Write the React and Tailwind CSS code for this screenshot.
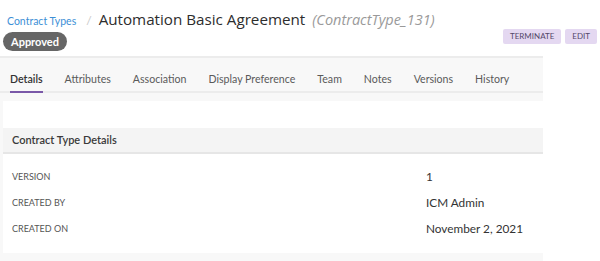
import React from 'react'

const tabs = ['Details', 'Attributes', 'Association', 'Display Preference', 'Team', 'Notes', 'Versions', 'History']

const rows = [
  { label: 'VERSION', value: '1' },
  { label: 'CREATED BY', value: 'ICM Admin' },
  { label: 'CREATED ON', value: 'November 2, 2021' },
]

export default function App() {
  return (
    <div className="w-[600px] h-[261px] bg-white overflow-hidden font-['Lato',sans-serif]">
      {/* Header */}
      <div className="flex items-baseline pl-[7px] pt-[8px] h-[29px]">
        <span className="text-[10.5px] text-[#3d8fd6]">Contract Types</span>
        <span className="text-[12px] text-[#c8c8c8] ml-[10px]">/</span>
        <span className="text-[15.2px] text-[#2d2d2d] ml-[7px] font-['Open_Sans',sans-serif]">Automation Basic Agreement</span>
        <span className="text-[14.5px] text-[#9a9a9a] italic ml-[7px] font-['Open_Sans',sans-serif]">(ContractType_131)</span>
      </div>
      <div className="flex items-start justify-between pl-[3px] pr-[3px] h-[27px]">
        <span className="mt-[3px] h-[19px] px-[8px] rounded-full bg-[#666666] text-white text-[11px] font-bold leading-[19px]">Approved</span>
        <div className="flex gap-[4px]">
          <button className="h-[15px] px-[7px] bg-[#e4d8f1] text-[#54486a] text-[8px] leading-[15px] rounded-[2px]">TERMINATE</button>
          <button className="h-[15px] px-[7px] bg-[#e4d8f1] text-[#54486a] text-[8px] leading-[15px] rounded-[2px]">EDIT</button>
        </div>
      </div>

      {/* Content */}
      <div className="w-[543px] bg-[#f8f8f8]">
        <div className="border-t-[2px] border-[#ececec] border-b-[2px] h-[37px] flex items-end pl-[10px] gap-[22px]">
          {tabs.map((t, i) => (
            <div
              key={t}
              className={`text-[10.6px] pb-[3px] border-b-[2px] -mb-[2px] ${i === 0 ? 'border-[#7a58a8] text-[#333] font-semibold' : 'border-transparent text-[#5a5a5a]'}`}
            >
              {t}
            </div>
          ))}
        </div>
        <div className="h-[8px]" />
        <div className="ml-[3px] bg-white">
          <div className="h-[27px]" />
          <div className="h-[26px] bg-[#f4f4f4] border-b-[2px] border-[#e6e6e6] flex items-center pl-[9px] text-[11px] font-semibold text-[#3a3a3a]">
            Contract Type Details
          </div>
          <div className="pt-[10px] pb-[11px]">
            {rows.map(r => (
              <div key={r.label} className="flex items-center h-[26px] pl-[9px]">
                <span className="w-[414px] text-[9px] text-[#555]">{r.label}</span>
                <span className="text-[11.8px] text-[#333]">{r.value}</span>
              </div>
            ))}
          </div>
        </div>
        <div className="h-[12px]" />
      </div>
    </div>
  )
}
